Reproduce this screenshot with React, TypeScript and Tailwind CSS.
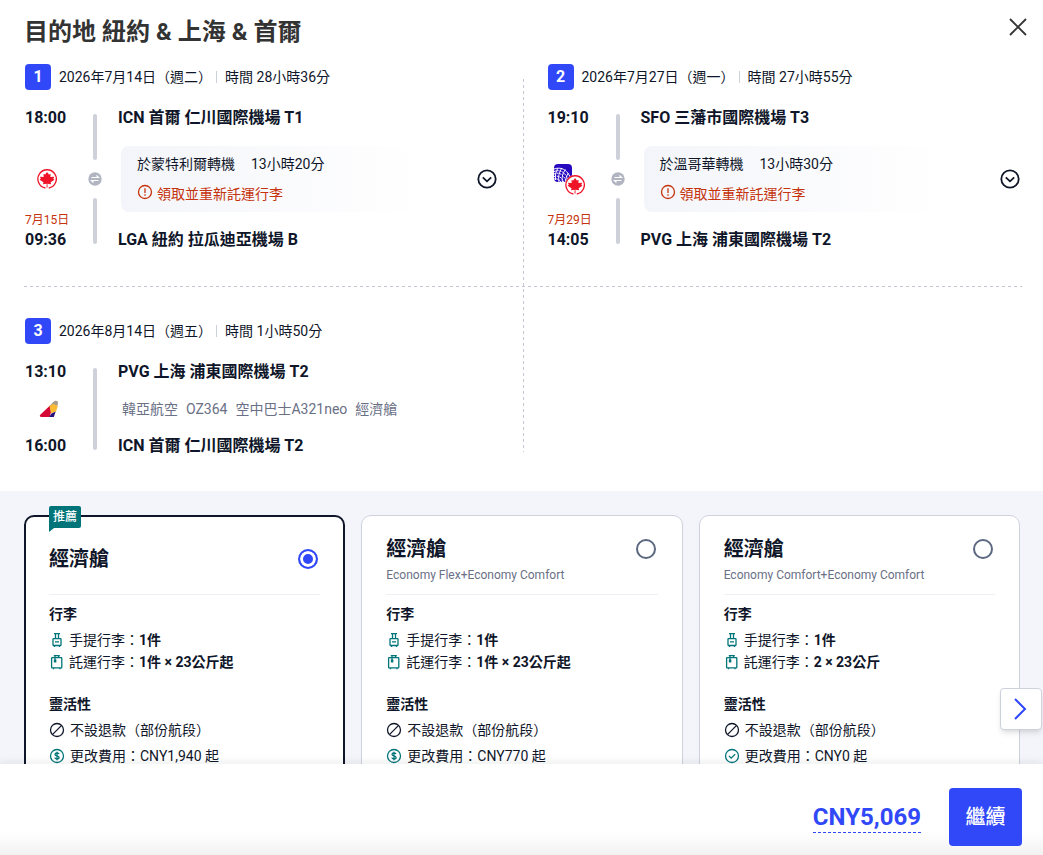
import { useState } from "react";

type Airline = "air-canada" | "united" | "asiana";

interface Leg {
  index: number;
  date: string;
  duration: string;
  departTime: string;
  departAirport: string;
  arriveDay?: string;
  arriveTime: string;
  arriveAirport: string;
  airlines: Airline[];
  transfer?: { place: string; wait: string; notice: string };
  details?: string[];
}

interface Fare {
  id: string;
  name: string;
  brand?: string;
  recommended?: boolean;
  checked: string;
  change: string;
  freeChange?: boolean;
}

const LEGS: Leg[] = [
  {
    index: 1,
    date: "2026年7月14日（週二）",
    duration: "時間 28小時36分",
    departTime: "18:00",
    departAirport: "ICN 首爾 仁川國際機場 T1",
    arriveDay: "7月15日",
    arriveTime: "09:36",
    arriveAirport: "LGA 紐約 拉瓜迪亞機場 B",
    airlines: ["air-canada"],
    transfer: { place: "於蒙特利爾轉機", wait: "13小時20分", notice: "領取並重新託運行李" },
  },
  {
    index: 2,
    date: "2026年7月27日（週一）",
    duration: "時間 27小時55分",
    departTime: "19:10",
    departAirport: "SFO 三藩市國際機場 T3",
    arriveDay: "7月29日",
    arriveTime: "14:05",
    arriveAirport: "PVG 上海 浦東國際機場 T2",
    airlines: ["united", "air-canada"],
    transfer: { place: "於溫哥華轉機", wait: "13小時30分", notice: "領取並重新託運行李" },
  },
  {
    index: 3,
    date: "2026年8月14日（週五）",
    duration: "時間 1小時50分",
    departTime: "13:10",
    departAirport: "PVG 上海 浦東國際機場 T2",
    arriveTime: "16:00",
    arriveAirport: "ICN 首爾 仁川國際機場 T2",
    airlines: ["asiana"],
    details: ["韓亞航空", "OZ364", "空中巴士A321neo", "經濟艙"],
  },
];

const FARES: Fare[] = [
  { id: "basic", name: "經濟艙", recommended: true, checked: "1件 × 23公斤起", change: "CNY1,940 起" },
  { id: "flex", name: "經濟艙", brand: "Economy Flex+Economy Comfort", checked: "1件 × 23公斤起", change: "CNY770 起" },
  { id: "comfort", name: "經濟艙", brand: "Economy Comfort+Economy Comfort", checked: "2 × 23公斤", change: "CNY0 起", freeChange: true },
];

export default function App() {
  const [fare, setFare] = useState("basic");

  return (
    <div className="flex h-screen flex-col bg-white font-[Roboto,'Noto_Sans_CJK_TC',sans-serif] text-sm text-[#0f1629]">
      <main className="min-h-0 flex-1 overflow-hidden">
        {/* Title */}
        <header className="flex items-start justify-between pt-[14px] pr-4 pl-6">
          <h1 className="text-2xl leading-9 font-bold text-[#333]">目的地 紐約 &amp; 上海 &amp; 首爾</h1>
          <button aria-label="關閉" className="mt-[3px] text-[#333]">
            <svg width="18" height="20" viewBox="0 0 18 20" fill="none" stroke="currentColor" strokeWidth="1.8">
              <path d="M1 2l16 16M17 2L1 18" />
            </svg>
          </button>
        </header>

        {/* Legs */}
        <section className="mt-[14px] mr-[21px] mb-[33px] ml-6 grid grid-cols-[1fr_1px_1fr] grid-rows-[auto_1px_auto]">
          <div className="pr-[26px] pb-[34px] pl-px">
            <LegCard leg={LEGS[0]} />
          </div>
          <div className="col-start-2 row-span-3 row-start-1 mt-[15px] mb-1.5 bg-[repeating-linear-gradient(to_bottom,#c5c8d2_0_3px,transparent_3px_6px)]" />
          <div className="col-start-3 row-start-1 pr-0.5 pb-[34px] pl-6">
            <LegCard leg={LEGS[1]} />
          </div>
          <div className="col-span-3 col-start-1 row-start-2 bg-[repeating-linear-gradient(to_right,#c5c8d2_0_3px,transparent_3px_6px)]" />
          <div className="col-start-1 row-start-3 pt-[31px] pl-px">
            <LegCard leg={LEGS[2]} />
          </div>
        </section>

        {/* Fares */}
        <section className="relative bg-[#f4f5fa] py-6 pr-[23px] pl-6">
          <div className="grid grid-cols-3 gap-4">
            {FARES.map((f) => (
              <FareCard key={f.id} fare={f} selected={fare === f.id} onSelect={() => setFare(f.id)} />
            ))}
          </div>
          <button
            aria-label="下一個"
            className="absolute top-[197px] right-px flex size-[42px] items-center justify-center rounded border border-[#ced2dd] bg-white text-[#3048f8] shadow-md"
          >
            <svg width="14" height="22" viewBox="0 0 14 22" fill="none" stroke="currentColor" strokeWidth="2">
              <path d="M1 1l10 10L1 21" />
            </svg>
          </button>
        </section>
      </main>

      {/* Footer */}
      <footer className="relative flex items-center justify-end gap-7 bg-linear-to-b from-white from-75% to-[#f2f2f2] pt-6 pr-[21px] pb-[9px] shadow-[0_-2px_8px_rgba(15,22,41,0.08)]">
        <a href="#price" className="border-b border-dashed border-[#3048f8] text-2xl leading-[30px] font-bold text-[#3048f8]">
          CNY5,069
        </a>
        <button className="h-[58px] w-[73px] rounded bg-[#3048f8] text-xl font-medium text-white">繼續</button>
      </footer>
    </div>
  );
}

function LegCard({ leg }: { leg: Leg }) {
  return (
    <article>
      <div className="flex items-center leading-[26px]">
        <span className="mr-2 size-[26px] rounded bg-[#3048f8] text-center text-base leading-[26px] font-bold text-white">
          {leg.index}
        </span>
        <span>{leg.date}</span>
        <span className="mr-2 ml-1 h-3 w-px bg-[#ced2dd]" />
        <span>{leg.duration}</span>
      </div>

      <div className="mt-4 flex">
        <div className="flex w-[43px] flex-col text-base font-bold">
          <time className="leading-6">{leg.departTime}</time>
          <div className={`flex flex-1 items-center justify-center ${leg.transfer ? "pt-4" : "pl-1"}`}>
            <AirlineLogos airlines={leg.airlines} />
          </div>
          {leg.arriveDay && (
            <span className="text-xs leading-4 font-normal whitespace-nowrap text-[#c5330c]">{leg.arriveDay}</span>
          )}
          <time className="leading-6">{leg.arriveTime}</time>
        </div>

        {/* Rail */}
        <div className="mr-4 ml-5 flex w-[14px] flex-col items-center py-2">
          <span className="w-1 flex-1 rounded-sm bg-[#ced0da]" />
          {leg.transfer && (
            <>
              <TransferIcon />
              <span className="w-1 flex-1 rounded-sm bg-[#ced0da]" />
            </>
          )}
        </div>

        <div className="flex-1">
          <h2 className="text-base leading-6 font-bold">{leg.departAirport}</h2>
          {leg.transfer && (
            <div className="my-4 ml-[3px] flex h-[66px] items-center justify-between">
              <div className="w-[300px] rounded-lg bg-linear-to-r from-[#f4f5fa] to-white px-4 py-2 leading-5">
                <p className="flex gap-4">
                  <span>{leg.transfer.place}</span>
                  <span>{leg.transfer.wait}</span>
                </p>
                <p className="mt-2.5 flex items-center gap-1 text-[#c5330c]">
                  <NoticeIcon />
                  {leg.transfer.notice}
                </p>
              </div>
              <button aria-label="展開詳情">
                <svg width="20" height="20" viewBox="0 0 20 20" fill="none" stroke="currentColor" strokeWidth="1.8">
                  <circle cx="10" cy="10" r="8.7" />
                  <path d="M5.8 8.3L10 12.3l4.2-4" />
                </svg>
              </button>
            </div>
          )}
          {leg.details && (
            <p className="my-[13px] ml-1 flex gap-2 leading-6 text-[#6a7086]">
              {leg.details.map((d) => (
                <span key={d}>{d}</span>
              ))}
            </p>
          )}
          <h2 className="text-base leading-6 font-bold">{leg.arriveAirport}</h2>
        </div>
      </div>
    </article>
  );
}

function FareCard({ fare, selected, onSelect }: { fare: Fare; selected: boolean; onSelect: () => void }) {
  return (
    <label
      className={`relative block rounded-[10px] bg-white pb-6 ${
        selected ? "border-2 border-[#0f1629] px-[23px]" : "border border-[#ced2dd] px-6 pt-px"
      }`}
    >
      {fare.recommended && (
        <span className="absolute -top-[11px] left-[23px] rounded-t-xs rounded-br-xs bg-[#007579] px-1 text-xs leading-[22px] font-medium text-white">
          推薦
          <svg className="absolute top-full left-0" width="5" height="4" viewBox="0 0 5 4">
            <path d="M0 0h5L0 4z" fill="#007579" />
          </svg>
        </span>
      )}

      <div className={`flex h-[78px] border-b border-[#eff0f5] ${fare.brand ? "pt-[18px]" : "items-center pt-[7px]"}`}>
        <div className="flex-1">
          <h3 className="text-xl leading-7 font-bold">{fare.name}</h3>
          {fare.brand && <p className="mt-0.5 text-xs leading-5 text-[#6a7086]">{fare.brand}</p>}
        </div>
        <input
          type="radio"
          name="fare"
          checked={selected}
          onChange={onSelect}
          className={`mr-0.5 size-5 appearance-none rounded-full border-2 border-[#5b6880] checked:border-[#3048f8] checked:bg-[#3048f8] checked:shadow-[inset_0_0_0_3px_white] ${fare.brand ? "mt-1" : ""}`}
        />
      </div>

      <h4 className="mt-[9px] leading-5 font-bold">行李</h4>
      <ul className="mt-[5px]">
        <FareRow icon={<CabinBagIcon />}>
          手提行李：<b>1件</b>
        </FareRow>
        <FareRow icon={<CheckedBagIcon />}>
          託運行李：<b>{fare.checked}</b>
        </FareRow>
      </ul>

      <h4 className="mt-[21px] leading-5 font-bold">靈活性</h4>
      <ul className="mt-[5px] flex flex-col gap-1">
        <FareRow icon={<NoRefundIcon />}>不設退款（部份航段）</FareRow>
        <FareRow icon={fare.freeChange ? <FreeIcon /> : <FeeIcon />}>更改費用：{fare.change}</FareRow>
      </ul>
    </label>
  );
}

function FareRow({ icon, children }: { icon: React.ReactNode; children: React.ReactNode }) {
  return (
    <li className="flex items-center gap-[5px] leading-[22px]">
      {icon}
      <span>{children}</span>
    </li>
  );
}

function AirlineLogos({ airlines }: { airlines: Airline[] }) {
  if (airlines.length > 1) {
    return (
      <div className="relative size-8">
        <div className="absolute top-0 left-0">
          <UnitedLogo />
        </div>
        <div className="absolute right-0 bottom-0">
          <AirCanadaLogo />
        </div>
      </div>
    );
  }
  return airlines[0] === "asiana" ? <AsianaLogo /> : <AirCanadaLogo />;
}

function AirCanadaLogo() {
  return (
    <svg width="20" height="20" viewBox="0 0 20 20" fill="none">
      <circle cx="10" cy="10" r="10" fill="#fff" />
      <path d="M8.4 19A9.2 9.2 0 1 1 11.8 19" stroke="#f01428" strokeWidth="1.3" />
      <path
        d="M10 3l1.900 2.600 1.700-.5-.2 3 3.800-.4-.9 2.100 1.200 1-3.900 2.400.5 2-3.700-.5.2 3.900H9.500l.2-3.900-3.700.5.500-2-3.900-2.400 1.200-1-.9-2.100 3.800.4-.2-3 1.700.5z"
        fill="#f01428"
      />
    </svg>
  );
}

function UnitedLogo() {
  return (
    <svg width="20" height="20" viewBox="0 0 20 20" fill="none">
      <rect x="1" y="1" width="18" height="18" rx="4" fill="#2508c0" />
      <g stroke="#fff" strokeWidth="1">
        <path d="M1 6c6-2 13-1 17.500 11" />
        <path d="M1 8.500c5-2 11-1 15 10" strokeDasharray="2 .8" />
        <path d="M1 11c4-2 9-1 12.500 8" strokeDasharray="2 .8" />
        <path d="M1 13.500c3-1 7-.5 10 5.500" strokeDasharray="2 .8" />
        <path d="M1 16c2-.6 5 0 7 3" />
        <path d="M5 5c-2 3-3 7-2.500 12" />
        <path d="M9 5c-3 4-4 9-3 14" />
        <path d="M12.500 6.500c-3 4-4 8-3 12.500" />
        <path d="M15.500 10c-2 3-3 5-2.500 9" />
      </g>
    </svg>
  );
}

function AsianaLogo() {
  return (
    <svg width="20" height="18" viewBox="0 0 20 18">
      <path d="M1 15L11 5.500l1 7L10.500 17H2.500C1 17 .5 16 1 15z" fill="#d60936" />
      <path d="M10.500 6L14.500 1.800c1.500-1.600 5-1.200 4.500 1.200l-.7 3z" fill="#a89d8d" />
      <path d="M10.500 6l4-2 4.300 2L17 11.500l-5 1.800z" fill="#fcbb32" />
      <path d="M10 17l2.500-3.500 4.200-2L14.800 17z" fill="#28107d" />
    </svg>
  );
}

function TransferIcon() {
  return (
    <svg className="my-3" width="14" height="14" viewBox="0 0 14 14" fill="none">
      <circle cx="7" cy="7" r="6.700" fill="#b1b5c2" />
      <path d="M3.500 5.500h7L8.500 3.500M10.500 8.500h-7l2 2" stroke="#fff" strokeWidth="1.200" />
    </svg>
  );
}

function NoticeIcon() {
  return (
    <svg className="-mt-1" width="16" height="16" viewBox="0 0 16 16" fill="none" stroke="currentColor" strokeWidth="1.300">
      <circle cx="8" cy="8" r="6.500" />
      <path d="M8 4.200v4.800M8 10.200v1.500" />
    </svg>
  );
}

function CabinBagIcon() {
  return (
    <svg width="15" height="16" viewBox="0 0 15 16" fill="none" stroke="#007579" strokeWidth="1.300">
      <path d="M5 1.600h6M6.500 1.600v5M9.500 1.600v5M4.500 6.700h7q.5 0 .5.5v5.800q0 .5-.5.5h-7q-.5 0-.5-.5V7.200q0-.5.5-.5zM5.500 13.500V15M10.500 13.500V15M6 9.800h4" />
    </svg>
  );
}

function CheckedBagIcon() {
  return (
    <svg width="15" height="16" viewBox="0 0 15 16" fill="none" stroke="#007579" strokeWidth="1.300">
      <path d="M3.200 3.600h9q.6 0 .6.600v9q0 .6-.6.600h-9q-.6 0-.6-.6v-9q0-.6.600-.6zM4.800 1.600h6M6 1.600v2M9.600 1.600v2M4.500 13.800v1.500M11 13.800v1.500M6 3.600v4.500" />
      <path d="M5.500 6.200h1.200v1.600H5.500z" fill="#007579" />
    </svg>
  );
}

function NoRefundIcon() {
  return (
    <svg width="16" height="16" viewBox="0 0 16 16" fill="none" stroke="currentColor" strokeWidth="1.300">
      <circle cx="8" cy="8" r="6.500" />
      <path d="M12.600 3.400l-9.200 9.200" />
    </svg>
  );
}

function FeeIcon() {
  return (
    <svg width="16" height="16" viewBox="0 0 16 16" fill="none" stroke="#007579" strokeWidth="1.300">
      <circle cx="8" cy="8" r="6.500" />
      <path d="M10 6.200C9.800 5.300 9 5 8 5c-1.200 0-2 .5-2 1.400 0 2.100 4.100 1 4.100 3.200C10.100 10.500 9.200 11 8 11c-1.200 0-2-.4-2.200-1.300M8 3.800v8.400" />
    </svg>
  );
}

function FreeIcon() {
  return (
    <svg width="16" height="16" viewBox="0 0 16 16" fill="none" stroke="#007579" strokeWidth="1.300">
      <circle cx="8" cy="8" r="6.500" />
      <path d="M4.900 7.900l2.300 2.200 4-4" />
    </svg>
  );
}
